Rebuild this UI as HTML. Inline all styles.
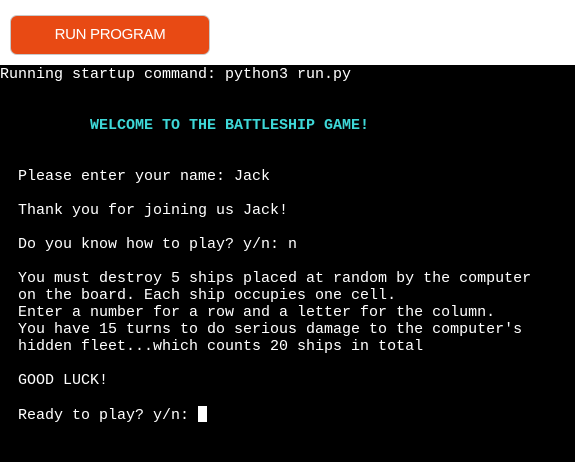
<!DOCTYPE html><html><head><style>
body{margin:0;width:575px;height:462px;background:#fff;overflow:hidden;position:relative}
.btn{position:absolute;left:10px;top:15px;width:198px;height:38px;background:#e84a14;border:1px solid #c9c9c9;border-radius:7px;color:#fff;font:15px "Liberation Sans",sans-serif;text-align:center;line-height:38px;letter-spacing:-0.3px}
.term{position:absolute;left:0;top:65px;width:575px;height:397px;background:#000}
pre{margin:0;position:absolute;left:0;top:1px;color:#fff;font:15px/17px "Liberation Mono",monospace}
.c{color:#3ed8d8;font-weight:bold}
.cur{display:inline-block;width:9px;height:16px;background:#fff;vertical-align:-3px}
</style></head><body>
<div class="btn">RUN PROGRAM</div>
<div class="term"><pre>Running startup command: python3 run.py


          <span class="c">WELCOME TO THE BATTLESHIP GAME!</span>


  Please enter your name: Jack

  Thank you for joining us Jack!

  Do you know how to play? y/n: n

  You must destroy 5 ships placed at random by the computer
  on the board. Each ship occupies one cell.
  Enter a number for a row and a letter for the column.
  You have 15 turns to do serious damage to the computer's
  hidden fleet...which counts 20 ships in total

  GOOD LUCK!

  Ready to play? y/n: <span class="cur"></span></pre></div>
</body></html>
